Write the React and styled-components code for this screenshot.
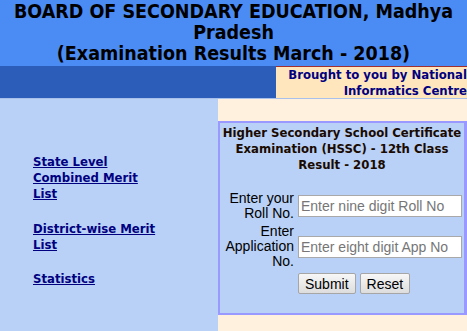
import React from 'react'
import styled, { createGlobalStyle } from 'styled-components'

const GlobalStyle = createGlobalStyle`
    html, body {
        margin: 0;
        padding: 0;
        overflow: hidden;
    }
    body {
        font-family: "DejaVu Sans Condensed", "Liberation Sans", Arial, sans-serif;
    }
`

const Page = styled.div`
    display: flex;
    flex-direction: column;
    min-height: 100vh;
    width: 100%;
`

const Header = styled.div`
    background-color: #4b8cf4;
    color: #000000;
    text-align: center;
    font-size: 19.5px;
    font-weight: bold;
    line-height: 21px;
    padding: 1px 0 2px;
`

const SubBar = styled.div`
    display: flex;
    border-bottom: 1px solid #a9c0ea;
`

const SubBarFill = styled.div`
    flex: 1;
    background-color: #2b5db9;
`

const Credit = styled.div`
    width: 191px;
    box-sizing: border-box;
    background-color: #ffe6bd;
    border-top: 1px solid #a03030;
    color: #000080;
    font-size: 13px;
    font-weight: bold;
    line-height: 15.5px;
    text-align: right;
    padding: 0 0 0 4px;
    height: 32px;
`

const Body = styled.div`
    flex: 1;
    display: flex;
`

const Sidebar = styled.div`
    width: 218px;
    box-sizing: border-box;
    background-color: #b9d1f6;
    padding: 55px 0 0 33px;
`

const LinkGroup = styled.div`
    width: 132px;
    margin-bottom: 18.5px;
    font-size: 13px;
    line-height: 16px;
`

const NavLink = styled.a`
    color: #000080;
    font-weight: bold;
    text-decoration: underline;
    cursor: pointer;
`

const Main = styled.div`
    flex: 1;
    background-color: #fff1dd;
    padding-top: 22px;
`

const FormBox = styled.div`
    background-color: #b9d1f6;
    border: 2px solid #9999ff;
    border-right-width: 3px;
    padding: 2px 2px 19px;
`

const FormTitle = styled.div`
    text-align: center;
    font-size: 13px;
    font-weight: bold;
    line-height: 16px;
    color: #1a0a00;
    margin-bottom: 18px;
`

const Grid = styled.div`
    display: grid;
    grid-template-columns: 72px 164px;
    column-gap: 4px;
    row-gap: 3px;
    align-items: center;
`

const Label = styled.div`
    font-family: "Liberation Sans", Arial, sans-serif;
    font-size: 14px;
    line-height: 15px;
    text-align: right;
    color: #000000;
`

const TextInput = styled.input`
    box-sizing: border-box;
    width: 164px;
    height: 22px;
    border: 1px solid #a9a9a9;
    background: #ffffff;
    padding: 0 2px;
    font-family: "Liberation Sans", Arial, sans-serif;
    font-size: 14px;
    outline: none;
    &::placeholder {
        color: #767676;
    }
`

const Buttons = styled.div`
    grid-column: 2;
    display: flex;
    gap: 4px;
    margin-top: 1px;
`

const Button = styled.button`
    font-family: "Liberation Sans", Arial, sans-serif;
    font-size: 14px;
    height: 21px;
    padding: 0 6px;
    border: 1px solid #a6a6a6;
    border-radius: 2px;
    color: #000000;
    background: linear-gradient(#f7f7f7, #dddddd);
`

const App = () => {
    return (
        <Page>
            <GlobalStyle />
            <Header>
                BOARD OF SECONDARY EDUCATION, Madhya Pradesh
                <br />
                (Examination Results March - 2018)
            </Header>
            <SubBar>
                <SubBarFill />
                <Credit>Brought to you by National Informatics Centre</Credit>
            </SubBar>
            <Body>
                <Sidebar>
                    <LinkGroup>
                        <NavLink>State Level Combined Merit List</NavLink>
                    </LinkGroup>
                    <LinkGroup>
                        <NavLink>District-wise Merit List</NavLink>
                    </LinkGroup>
                    <LinkGroup>
                        <NavLink>Statistics</NavLink>
                    </LinkGroup>
                </Sidebar>
                <Main>
                    <FormBox>
                        <FormTitle>
                            Higher Secondary School Certificate Examination (HSSC) - 12th Class Result - 2018
                        </FormTitle>
                        <Grid>
                            <Label>Enter your Roll No.</Label>
                            <TextInput placeholder="Enter nine digit Roll No" />
                            <Label>Enter Application No.</Label>
                            <TextInput placeholder="Enter eight digit App No" />
                            <Buttons>
                                <Button>Submit</Button>
                                <Button>Reset</Button>
                            </Buttons>
                        </Grid>
                    </FormBox>
                </Main>
            </Body>
        </Page>
    )
}

export default App
